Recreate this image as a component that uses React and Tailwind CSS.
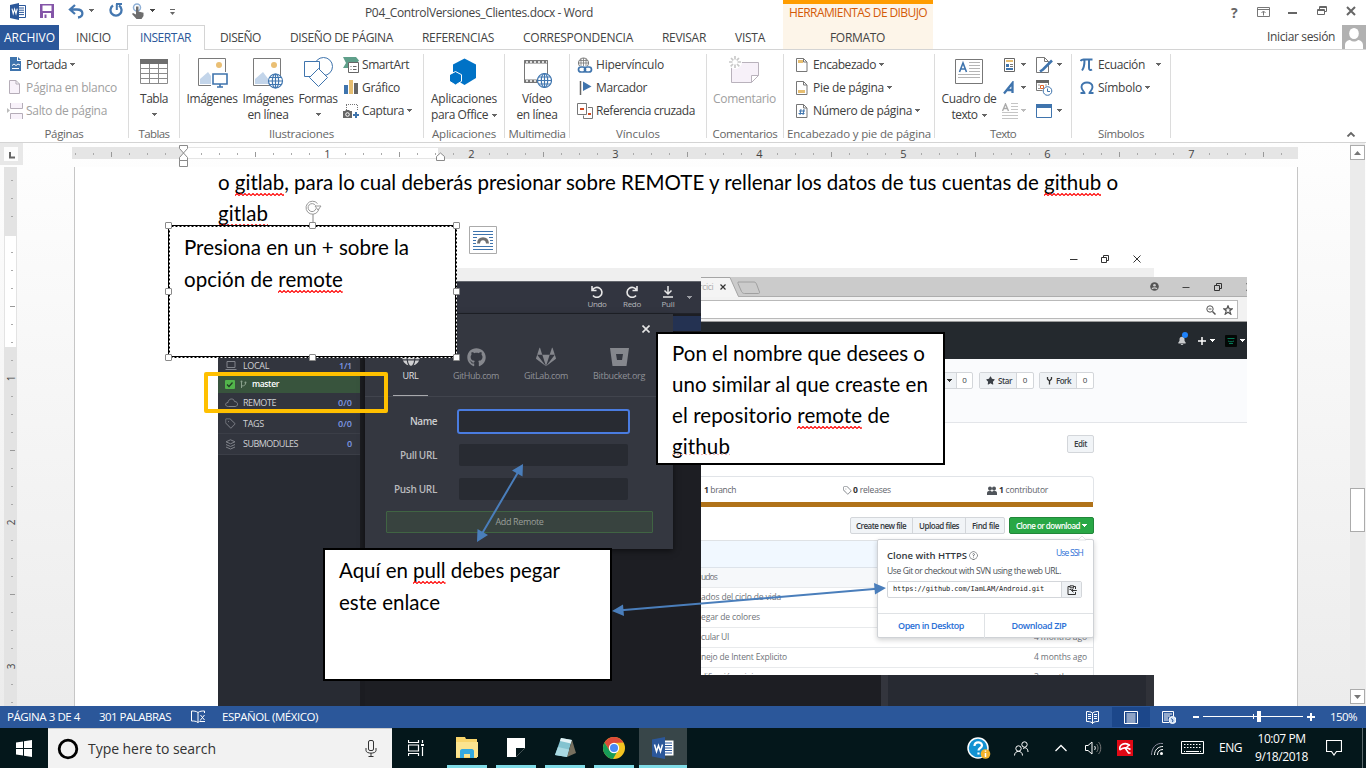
import React, { useLayoutEffect, useRef } from "react";
import { FaGithub, FaGitlab, FaGlobe, FaStar } from "react-icons/fa";
import {
  GoTag,
  GoBellFill,
  GoQuestion,
} from "react-icons/go";

/* Text run that spreads its letters so that it takes exactly `w` pixels. */
function Fit({ w, className = "", children }) {
  const ref = useRef(null);
  useLayoutEffect(() => {
    const el = ref.current;
    el.style.letterSpacing = "0px";
    const natural = el.getBoundingClientRect().width;
    const count = Math.max(1, el.textContent.length);
    el.style.letterSpacing = (w - natural) / count + "px";
  }, [w, children]);
  return (
    <span className={"inline-block shrink-0 whitespace-pre text-left " + className} style={{ width: w }}>
      <span ref={ref}>{children}</span>
    </span>
  );
}

/* SVG whose size is that of its view box. */
function Pic({ box, className = "", children }) {
  const [, , w, h] = box.split(" ");
  return (
    <svg viewBox={box} width={w} height={h} fill="none" className={"block shrink-0 " + className}>
      {children}
    </svg>
  );
}

function Caret({ className = "", fill = "#666" }) {
  return (
    <Pic box="0 0 5 3" className={className}>
      <path d="M0 0h5v1H4v1H3v1H2V2H1V1H0z" fill={fill} shapeRendering="crispEdges" />
    </Pic>
  );
}

/* Misspelled word with a tight red squiggle below its baseline. */
function Err({ children }) {
  return (
    <span className="relative">
      {children}
      <svg className="absolute bottom-[-2px] left-0 h-[3px] w-full" fill="none">
        <defs>
          <pattern id="squiggle" width="4" height="3" patternUnits="userSpaceOnUse">
            <path d="M-1 3.500L2 .5l3 3" stroke="#f00" strokeWidth="1.100" />
          </pattern>
        </defs>
        <rect width="100%" height="3" fill="url(#squiggle)" />
      </svg>
    </span>
  );
}

/* ---------- title bar and tabs ---------- */

function TitleBar() {
  return (
    <div className="flex h-[25px] w-full items-center">
      <Pic box="10 3 16 17" className="mb-[2px] ml-[10px]">
        <path d="M18 5.500h7.500v12H18" stroke="#2b579a" />
        <path d="M19 8h5M19 10.200h5M19 12.400h5M19 14.600h5" stroke="#2b579a" />
        <path d="M10 5l9-2v17l-9-2z" fill="#2b579a" />
        <path d="M12 8.700l1.200 5 1.400-4.600 1.400 4.600 1.200-5" stroke="#fff" strokeWidth="1.100" />
      </Pic>
      <Pic box="40 4 14 14" className="mb-[3px] ml-[14px]">
        <path d="M40 4h14v14H40z" fill="#8455a8" />
        <path d="M42.500 5.500h9v5.500h-9zM43 13h8v5h-8z" fill="#fff" />
        <path d="M44.500 14.500h2v3.500h-2z" fill="#8455a8" />
      </Pic>
      <Pic box="68 2 16 16" className="mb-[4px] ml-[14px]">
        <path d="M75 4l-5 4.500 5 4.500M70 8.500h7c7 0 7 7 1 8" stroke="#4477b0" strokeWidth="2.300" />
      </Pic>
      <Caret className="mb-[4px] ml-[5px]" />
      <Pic box="108 3 15 15" className="mb-[4px] ml-[14px]">
        <path d="M113 5.500a5.500 5.500 0 1 0 6 0" stroke="#4477b0" strokeWidth="2.300" />
        <path d="M116 4h6M116.800 4v6" stroke="#4477b0" strokeWidth="2" />
      </Pic>
      <Pic box="131 3 14 16" className="mb-[3px] ml-[8px]">
        <circle cx="137" cy="7.500" r="3.500" stroke="#8fb0d6" strokeWidth="1.500" />
        <path d="M136 6.500h2.500v5l5 1.200v3.300l-2 3h-5l-4.500-5 1-1 3 1.500z" fill="#6d6d6d" />
      </Pic>
      <Caret className="mb-[4px] ml-[5px]" fill="#444" />
      <Pic box="170 8 6 8" className="mb-[2px] ml-[15px]">
        <path d="M170 9.500h5" stroke="#666" />
        <path d="M170 12h5l-2.500 3z" fill="#666" />
      </Pic>
      <Fit w={228} className="ml-[189px] text-[12px] leading-[25px] text-[#444]">
        P04_ControlVersiones_Clientes.docx - Word
      </Fit>
      <div className="ml-[190px] flex h-[25px] w-[150px] flex-col border-t-[4px] border-[#ff9c00] bg-[#fdf5e9]">
        <Fit w={138} className="ml-[6px] text-[12px] leading-[18px] text-[#d45a08]">
          HERRAMIENTAS DE DIBUJO
        </Fit>
      </div>
      <span className="ml-[298px] w-[9px] text-[14px] leading-[22px] font-bold text-[#666]">?</span>
      <Pic box="1257 6 13 10" className="mb-[2px] ml-[17px]">
        <path d="M1257.500 6.500h12v9h-12zM1257.500 8.500h12" stroke="#777" />
        <path d="M1263.500 14.500v-4M1261.500 12l2-2 2 2" stroke="#777" />
      </Pic>
      <Pic box="1288 7 9 8" className="mb-[3px] ml-[18px]">
        <path d="M1288 13h9" stroke="#666" strokeWidth="2" />
      </Pic>
      <Pic box="1317 6 10 10" className="mb-[3px] ml-[20px]">
        <path d="M1317.500 9.500h7v5h-7zM1317.500 10.500h7M1319.500 9v-2.500h7v5h-2M1319.500 7.500h7" stroke="#666" />
      </Pic>
      <Pic box="1346 6 10 10" className="mb-[3px] ml-[19px]">
        <path d="M1347 7l8 8M1355 7l-8 8" stroke="#666" strokeWidth="2" />
      </Pic>
    </div>
  );
}

function Tabs() {
  return (
    <div className="flex h-[25px] w-full items-stretch text-[12px] leading-[25px] text-[#444]">
      <div className="w-[59px] bg-[#2b579a] pl-[4px] text-white">
        <Fit w={51}>ARCHIVO</Fit>
      </div>
      <div className="flex w-[68px] border-b border-[#d4d4d4] pl-[17px]">
        <Fit w={35}>INICIO</Fit>
      </div>
      <div className="flex w-[78px] border-x border-t border-[#d4d4d4] pl-[12px] leading-[23px] text-[#2b579a]">
        <Fit w={51}>INSERTAR</Fit>
      </div>
      <div className="flex w-[578px] border-b border-[#d4d4d4] pl-[15px]">
        <Fit w={41}>DISEÑO</Fit>
        <Fit w={103} className="ml-[29px]">DISEÑO DE PÁGINA</Fit>
        <Fit w={72} className="ml-[29px]">REFERENCIAS</Fit>
        <Fit w={110} className="ml-[29px]">CORRESPONDENCIA</Fit>
        <Fit w={44} className="ml-[29px]">REVISAR</Fit>
        <Fit w={30} className="ml-[29px]">VISTA</Fit>
      </div>
      <div className="w-[150px] border-b border-[#d4d4d4] bg-[#fdf5e9] pl-[47px]">
        <Fit w={55}>FORMATO</Fit>
      </div>
      <div className="flex w-[433px] border-b border-[#d4d4d4] pl-[334px] leading-[24px]">
        <Fit w={68}>Iniciar sesión</Fit>
        <Pic box="0 0 24 24" className="ml-[7px] bg-[#b1b1b1]">
          <ellipse cx="12" cy="8.500" rx="4.800" ry="5.500" fill="#fff" />
          <path d="M3 24v-4c0-4 4-5 5-5 2.500 2 5.500 2 8 0 1 0 5 1 5 5v4z" fill="#fff" />
        </Pic>
      </div>
    </div>
  );
}

/* ---------- ribbon ---------- */

function Group({ className, label, lw, children }) {
  return (
    <div className={"flex h-[92px] shrink-0 " + className}>
      <div className="flex min-w-0 flex-1 flex-col">
        <div className="mt-[4px] flex h-[71px]">{children}</div>
        <div className="flex justify-center leading-[17px] text-[#666]">
          <Fit w={lw} className="text-[11.5px]">{label}</Fit>
        </div>
      </div>
      <div className="mt-[4px] h-[84px] w-px bg-[#dcdcdc]" />
    </div>
  );
}

function Small({ icon, text, w, gap = "w-[17px]", caret, caretGap = "ml-[5px]", off }) {
  return (
    <div className={"flex h-[23px] items-center " + (off ? "text-[#a0a0a0]" : "text-[#404040]")}>
      <div className={"flex shrink-0 " + gap}>{icon}</div>
      <Fit w={w}>{text}</Fit>
      {caret && <Caret className={caretGap} />}
    </div>
  );
}

function Big({ className, icon, lines, caret, off }) {
  return (
    <div className={"flex shrink-0 flex-col items-center leading-[16px] " + className + (off ? " text-[#a0a0a0]" : " text-[#404040]")}>
      {icon}
      <div className="h-px" />
      {lines.map(([t, w], i) => (
        <div key={i} className="flex items-center">
          <Fit w={w}>{t}</Fit>
          {caret === "inline" && i === lines.length - 1 && <Caret className="ml-[4px]" />}
        </div>
      ))}
      {caret === "below" && <Caret className="mt-[6px]" />}
    </div>
  );
}

const globe = (cx, cy, r) => (
  <g stroke="#4177b0" strokeWidth="1.200">
    <circle cx={cx} cy={cy} r={r} fill="#fff" />
    <ellipse cx={cx} cy={cy} rx={r / 2.2} ry={r} />
    <path d={`M${cx - r} ${cy}h${2 * r}M${cx} ${cy - r}v${2 * r}M${cx - r + 1} ${cy - r / 2}h${2 * r - 2}M${cx - r + 1} ${cy + r / 2}h${2 * r - 2}`} />
  </g>
);

const photo = (x) => (
  <g>
    <path d={`M${x + 0.5} 58.500h27v27h-27z`} fill="#fff" stroke="#7a7a7a" />
    <path d={`M${x + 2} 84v-5l8-7 9 12z`} fill="#c3d5ea" />
    <circle cx={x + 21} cy="65" r="3" fill="#eabf74" />
  </g>
);

const sheet = (
  <path d="M796.500 57.500h7l3.500 3.500v9.500h-10.500zM803.500 57.500v3.500h3.500" fill="#fff" stroke="#777" />
);

function Ribbon() {
  return (
    <div className="flex h-[93px] w-full border-b border-[#d4d4d4] text-[12px]">
      <Group className="w-[129px]" label="Páginas" lw={39}>
        <div className="-mt-px flex flex-col pl-[7px]">
          <Small
            gap="w-[19px]"
            icon={
              <Pic box="7 57 16 15">
                <path d="M10 57h7v4h4v10H10z" fill="#3f74ad" />
                <path d="M18 57l3 3h-3z" fill="#3f74ad" />
                <path d="M12 65.500l2-1.500 2 1.500 2-1.500 2 1M12 68.500h7" stroke="#fff" />
              </Pic>
            }
            text="Portada" w={41} caret caretGap="ml-[3px]"
          />
          <Small
            gap="w-[19px]" off
            icon={
              <Pic box="7 80 16 15">
                <path d="M9.500 80.500h6.500l3.500 3.500v9.500h-10zM16 80.500v3.500h3.500" fill="#f8f2fa" stroke="#b5adb8" />
              </Pic>
            }
            text="Página en blanco" w={91}
          />
          <Small
            gap="w-[19px]" off
            icon={
              <Pic box="7 102 16 16">
                <path d="M10.500 102v5.500h12V102M10.500 118v-5.500h12v5.500" fill="#f8f2fa" stroke="#b5adb8" />
                <path d="M7 107v5l3-2.500z" fill="#bbb" />
              </Pic>
            }
            text="Salto de página" w={81}
          />
        </div>
      </Group>

      <Group className="w-[51px]" label="Tablas" lw={31}>
        <Big
          className="w-[50px]"
          icon={
            <Pic box="140 54 28 36">
              <path d="M140.500 59.500h27v24h-27zM140 68.500h28M140 73.500h28M140 78.500h28M149.500 63v21M158.500 63v21" stroke="#8b8b8b" />
              <path d="M140 59h28v5h-28z" fill="#6e6e6e" />
            </Pic>
          }
          lines={[["Tabla", 28]]} caret="below"
        />
      </Group>

      <Group className="w-[244px]" label="Ilustraciones" lw={65}>
        <Big
          className="ml-[6px] w-[52px]"
          icon={
            <Pic box="197 54 31 36">
              {photo(198)}
              <path d="M211 72h18v16h-18z" fill="#fff" />
              <path d="M213 74h14v10h-14zM220 84v3M217 87h6" stroke="#3f74ad" strokeWidth="1.600" />
            </Pic>
          }
          lines={[["Imágenes", 51]]}
        />
        <Big
          className="ml-[4px] w-[52px]"
          icon={
            <Pic box="253 54 32 36">
              {photo(254)}
              {globe(276.5, 81, 7)}
            </Pic>
          }
          lines={[["Imágenes", 51], ["en línea", 41]]}
        />
        <Big
          className="ml-[3px] w-[42px]"
          icon={
            <Pic box="302 54 31 36">
              <circle cx="322.500" cy="66.500" r="9" fill="#fff" stroke="#3f74ad" />
              <path d="M303.500 61.500h15v15h-15z" fill="#fff" stroke="#3f74ad" />
              <path d="M317.500 68.500l9 9-9 9-9-9z" fill="#fff" stroke="#3f74ad" />
            </Pic>
          }
          lines={[["Formas", 39]]} caret="below"
        />
        <div className="-mt-px ml-[4px] flex flex-col">
          <Small
            gap="w-[19px]"
            icon={
              <Pic box="343 56 16 16">
                <path d="M343 56h13l3 3.500-2 2.500h-7v5h-7l3-5z" fill="#5f9f8a" />
                <path d="M348.500 61.500h10v10h-10z" fill="#fff" stroke="#666" />
                <path d="M350.500 65.500h1M353 65.500h3.500M350.500 68.500h1M353 68.500h3.500" stroke="#666" />
              </Pic>
            }
            text="SmartArt" w={47}
          />
          <Small
            gap="w-[19px]"
            icon={
              <Pic box="343 80 16 15">
                <path d="M344 85h4v9h-4z" fill="#3f74ad" />
                <path d="M349 80h4v14h-4z" fill="#e6bd70" />
                <path d="M354 83h4v11h-4z" fill="#666" />
              </Pic>
            }
            text="Gráfico" w={38}
          />
          <Small
            gap="w-[19px]"
            icon={
              <Pic box="343 103 17 15">
                <path d="M346 104.500h12M346.500 105v5M357.500 105v5" stroke="#777" strokeDasharray="1 1" />
                <path d="M343 111h2l1-1h3l1 1h2v7h-9z" fill="#666" />
                <circle cx="347.500" cy="114.500" r="1.800" stroke="#fff" />
                <path d="M356 112v6M353 115h6" stroke="#3f74ad" strokeWidth="2" />
              </Pic>
            }
            text="Captura" w={42} caret caretGap="ml-[3px]"
          />
        </div>
      </Group>

      <Group className="w-[81px]" label="Aplicaciones" lw={64}>
        <Big
          className="w-[80px]"
          icon={
            <Pic box="450 54 28 36">
              <path d="M464.500 58.500l11.500 6v13.500l-11.500 7-11.500-7V64.500z" fill="#0072c6" />
              <path d="M455.500 71.500l6 3.200v6.600l-6 3.700-6-3.700v-6.600z" fill="#0072c6" stroke="#fff" />
            </Pic>
          }
          lines={[["Aplicaciones", 66], ["para Office", 57]]} caret="inline"
        />
      </Group>

      <Group className="w-[65px]" label="Multimedia" lw={57}>
        <Big
          className="w-[64px]"
          icon={
            <Pic box="523 54 30 36">
              <path d="M525.500 60.500h23v22h-23z" fill="#fff" stroke="#777" />
              <path d="M525 62h24M525 81h24" stroke="#777" strokeWidth="3" />
              <path d="M527 62h21M527 81h21" stroke="#fff" strokeDasharray="2 2" strokeWidth="1.500" />
              {globe(545.5, 80.5, 7)}
            </Pic>
          }
          lines={[["Vídeo", 30], ["en línea", 41]]}
        />
      </Group>

      <Group className="w-[137px]" label="Vínculos" lw={44}>
        <div className="-mt-px flex flex-col pl-[7px]">
          <Small
            gap="w-[19px]"
            icon={
              <Pic box="577 56 16 16">
                <circle cx="583.500" cy="62" r="5" stroke="#777" />
                <path d="M578 62h11M583.500 57v10M579.500 59.500h8M581 57.500v8M586 57.500v8" stroke="#777" strokeWidth=".8" />
                <path d="M577 65h16v7h-16z" fill="#fff" />
                <rect x="578.500" y="66" width="7" height="5" rx="2.500" stroke="#3f74ad" strokeWidth="1.700" />
                <rect x="584.500" y="66" width="7" height="5" rx="2.500" stroke="#3f74ad" strokeWidth="1.700" />
              </Pic>
            }
            text="Hipervínculo" w={68}
          />
          <Small
            gap="w-[19px]"
            icon={
              <Pic box="577 79 16 16">
                <path d="M580.500 80v14" stroke="#666" strokeWidth="1.500" />
                <path d="M583 80.500l8.500 5-8.500 4.500z" fill="#3f74ad" />
              </Pic>
            }
            text="Marcador" w={51}
          />
          <Small
            gap="w-[19px]"
            icon={
              <Pic box="577 102 16 16">
                <path d="M577.500 102.500h9v11h-9z" stroke="#777" fill="#fff" />
                <path d="M588 106.500h4.500v11h-9v-3" stroke="#777" />
                <path d="M580 107h4v2h-4zM588 112h3v2h-3z" fill="#d24a23" />
              </Pic>
            }
            text="Referencia cruzada" w={99}
          />
        </div>
      </Group>

      <Group className="w-[77px]" label="Comentarios" lw={65}>
        <Big
          off
          className="w-[75px]"
          icon={
            <Pic box="729 54 31 36">
              <path d="M731.500 62.500h27v13l-7 7h-20zM758.500 75.500h-7v7" fill="#f7f1f9" stroke="#b9b2bc" />
              <circle cx="735" cy="62" r="7" fill="#fff" />
              <path d="M735 56v3.500M735 64.500v3.500M729 62h3.500M737.500 62h3.500M731 58l2.300 2.300M737 64l2.300 2.300M739 58l-2.300 2.300M733 64l-2.300 2.300" stroke="#c9c9c9" strokeWidth="1.700" />
            </Pic>
          }
          lines={[["Comentario", 63]]}
        />
      </Group>

      <Group className="w-[151px]" label="Encabezado y pie de página" lw={144}>
        <div className="-mt-px flex flex-col pl-[12px]">
          <Small icon={<Pic box="796 57 12 14">{sheet}<path d="M798 59h5v3h-5z" fill="#e6bd70" /></Pic>} text="Encabezado" w={63} caret caretGap="ml-[3px]" />
          <Small icon={<Pic box="796 57 12 14">{sheet}<path d="M798 66h7v3h-7z" fill="#e6bd70" /></Pic>} text="Pie de página" w={71} caret caretGap="ml-[3px]" />
          <Small
            icon={<Pic box="796 57 12 14">{sheet}<path d="M801 62l-1 6M804 62l-1 6M799 64h6M798.500 66.500h6" stroke="#3f74ad" /></Pic>}
            text="Número de página" w={99} caret caretGap="ml-[3px]"
          />
        </div>
      </Group>

      <Group className="w-[137px]" label="Texto" lw={26}>
        <Big
          className="ml-[5px] w-[58px]"
          icon={
            <Pic box="955 54 28 36">
              <path d="M955.500 59.500h27v24h-27z" stroke="#777" />
              <path d="M969 62.500h11M969 65.500h11M969 68.500h11M969 71.500h11M958 74.500h22M958 77.500h22" stroke="#b5b5b5" />
              <path d="M959.500 72l3.500-9 3.500 9M960.700 69h4.700" stroke="#3f74ad" strokeWidth="1.600" />
            </Pic>
          }
          lines={[["Cuadro de", 55], ["texto", 26]]} caret="inline"
        />
        <div className="-mt-px ml-[4px] flex w-[34px] flex-col">
          <div className="flex h-[23px] items-center gap-[3px]">
            <Pic box="1002 57 16 14">
              <path d="M1004.500 57.500h10v13h-10z" stroke="#666" />
              <path d="M1006 59h7v2h-7z" fill="#e6bd70" />
              <path d="M1006 63h3v3h-3zM1006 67h7v2h-7z" fill="#3f74ad" />
              <path d="M1010 63.500h3M1010 65.500h3" stroke="#777" />
            </Pic>
            <Caret />
          </div>
          <div className="flex h-[23px] items-center gap-[3px]">
            <Pic box="1002 80 16 14">
              <path d="M1004 92.500l8.500-10.500v10M1006.500 89h6" stroke="#3f74ad" strokeWidth="2.300" />
            </Pic>
            <Caret />
          </div>
          <div className="flex h-[23px] items-center gap-[3px]">
            <Pic box="1002 102 16 16">
              <path d="M1011 102.500h7M1011 105.500h7M1011 108.500h7M1002 111.500h16M1002 114.500h16M1002 117.500h16" stroke="#c5c5c5" />
              <path d="M1002.500 110l3-7 3 7M1003.500 107.500h4" stroke="#aaa" strokeWidth="1.400" />
            </Pic>
            <Caret fill="#bbb" />
          </div>
        </div>
        <div className="-mt-px flex flex-col">
          <div className="flex h-[23px] items-center gap-[4px]">
            <Pic box="1035 56 17 16">
              <path d="M1035.500 56.500h8l4 4v11h-12zM1043.500 56.500v4h4" stroke="#777" fill="#fff" />
              <path d="M1051 59.500l-9 9-3 2" stroke="#3f74ad" strokeWidth="2.600" />
            </Pic>
            <Caret />
          </div>
          <div className="flex h-[23px] items-center">
            <Pic box="1035 79 17 16">
              <path d="M1035.500 80v9.500h6M1047.500 80v4" stroke="#777" />
              <path d="M1035 79h13v3h-13z" fill="#666" />
              <path d="M1037 84h2M1044 84h2M1037 87.500h2" stroke="#999" />
              <path d="M1039.500 84.500h3v3h-3z" stroke="#e0662b" />
              <circle cx="1046.500" cy="90" r="4.300" fill="#fff" stroke="#3f74ad" />
              <path d="M1046.500 87.500v3h2.500" stroke="#3f74ad" />
            </Pic>
          </div>
          <div className="flex h-[23px] items-center gap-[4px]">
            <Pic box="1035 103 17 14">
              <path d="M1035.500 103.500h15v13h-15z" stroke="#3f74ad" fill="#fff" />
              <path d="M1035 103h16v4h-16z" fill="#3f74ad" />
            </Pic>
            <Caret />
          </div>
        </div>
      </Group>

      <Group className="w-[99px]" label="Símbolos" lw={46}>
        <div className="-mt-px flex flex-col pl-[8px]">
          <Small gap="w-[18px]" icon={<Pic box="1080 57 14 14"><path d="M1080.500 60c1-1.500 2-1.500 3-1.500h9M1084.500 59c0 5-.5 8-2.500 10.500M1089 59v8c0 2 1.500 2.500 3 1.500" stroke="#3f74ad" strokeWidth="2" /></Pic>} text="Ecuación" w={47} caret caretGap="ml-[11px]" />
          <Small gap="w-[18px]" icon={<Pic box="1080 80 14 14"><path d="M1080.500 92h4c0-1.500-3-2.500-3-6 0-6 11-6 11 0 0 3.500-3 4.500-3 6h4" stroke="#3f74ad" strokeWidth="1.900" /></Pic>} text="Símbolo" w={44} caret caretGap="ml-[3px]" />
        </div>
      </Group>

      <div className="flex flex-1 items-end justify-end pr-[10px] pb-[5px]">
        <Pic box="0 0 10 6"><path d="M1.500 5.500L5 2l3.500 3.500" stroke="#666" strokeWidth="1.800" /></Pic>
      </div>
    </div>
  );
}

/* ---------- rulers ---------- */

function HorizontalRuler() {
  const ticks = [];
  for (let x = 75.5, i = -6; x < 1296; x += 18, i += 1) {
    const m = ((i % 8) + 8) % 8;
    if (m === 0) {
      if (i > 0) ticks.push(<text key={i} x={x} y="158" textAnchor="middle" className="text-[11px]" fill="#444">{i / 8}</text>);
    } else if (m === 4) ticks.push(<path key={i} d={`M${x} 152v5`} stroke="#999" />);
    else ticks.push(<path key={i} d={`M${x} 153v2`} stroke="#aaa" />);
  }
  return (
    <Pic box="72 143 1226 24">
      <path d="M72 147h1226v12H72z" fill="#e5e5e5" />
      <path d="M183 148h255v10H183z" fill="#fff" />
      {ticks}
      <path d="M179.500 145.500h8v3l-4 4.500-4-4.500zM179.500 160.500v-3l4-4.500 4 4.500v3zM179.500 160.500h8v6h-8zM436.500 160.500v-4l4-3.500 4 3.500v4z" fill="#fff" stroke="#8a8a8a" />
    </Pic>
  );
}

function VerticalRuler() {
  const ticks = [];
  for (let y = 180.5, i = -3; y < 706; y += 18, i += 1) {
    const m = ((i % 8) + 8) % 8;
    if (m === 0) {
      if (i > 0) ticks.push(<text key={i} transform={`translate(15 ${y}) rotate(-90)`} textAnchor="middle" className="text-[10px]" fill="#444">{i / 8}</text>);
    } else if (m === 4) ticks.push(<path key={i} d={`M10 ${y}h5`} stroke="#999" />);
    else ticks.push(<path key={i} d={`M11 ${y}h2`} stroke="#aaa" />);
  }
  return (
    <Pic box="4 167 13 539" className="ml-[4px]">
      <path d="M4 167h13v539H4z" fill="#e3e3e3" />
      <path d="M5 236h11v111H5z" fill="#fff" />
      {ticks}
    </Pic>
  );
}

/* ---------- pictures placed in the document ---------- */

function ToolButton({ className, label, w, children }) {
  return (
    <div className={"flex flex-col items-center pt-[3px] " + className}>
      {children}
      <Fit w={w} className="mt-px text-[8px] leading-[9px] text-[#b4b6ba]">{label}</Fit>
    </div>
  );
}

function SideRow({ className, icon, label, w, count, cw }) {
  return (
    <div className={"flex items-center border-b border-[#3b3e47] pl-[7px] pr-[8px] " + className}>
      <div className="flex w-[18px] text-[#80838a]">{icon}</div>
      <Fit w={w} className="text-[9px] text-[#d0d1d4]">{label}</Fit>
      <span className="flex-1" />
      <Fit w={cw} className="text-[9px] font-semibold text-[#7d97e6]">{count}</Fit>
    </div>
  );
}

function Provider({ className, icon, label, w, on }) {
  return (
    <div className={"flex flex-col items-center " + className}>
      <div className="flex h-[22px] items-center">{icon}</div>
      <Fit w={w} className={"mt-[2px] text-[9px] leading-[12px] " + (on ? "text-[#e0e0e2]" : "text-[#8f9197]")}>{label}</Fit>
    </div>
  );
}

function WindowButtons() {
  return (
    <div className="flex h-[24px] items-center bg-white pl-[852px] pt-[6px]">
      <Pic box="0 0 8 8"><path d="M0 4.500h7.500" stroke="#333" /></Pic>
      <Pic box="0 0 8 8" className="ml-[23px]"><path d="M.5 2.500h5v5h-5zM2.500 2V.5h5v5H6" stroke="#333" /></Pic>
      <Pic box="0 0 8 8" className="ml-[24px]"><path d="M.5.5l7 7M7.500.5l-7 7" stroke="#333" /></Pic>
    </div>
  );
}

function GitClient() {
  return (
    <div className="flex h-[462px] w-[936px] flex-col overflow-hidden">
      <WindowButtons />
      <div className="h-[13px] shrink-0 bg-[#efefef]" />
      <div className="flex h-[33px] shrink-0 border-b border-t border-t-[#63666d] border-b-[#202229] bg-[#323540]">
        <ToolButton className="ml-[364px] w-[30px]" label="Undo" w={19}>
          <Pic box="0 0 14 13"><path d="M2 1v4.500h4.500M2.500 5a5 5 0 1 1 .5 5.500" stroke="#e8e8e8" strokeWidth="1.600" /></Pic>
        </ToolButton>
        <ToolButton className="ml-[5px] w-[30px]" label="Redo" w={18}>
          <Pic box="0 0 14 13"><path d="M12 1v4.500H7.500M11.500 5a5 5 0 1 0-.5 5.500" stroke="#e8e8e8" strokeWidth="1.600" /></Pic>
        </ToolButton>
        <ToolButton className="ml-[6px] w-[30px]" label="Pull" w={13}>
          <Pic box="0 0 12 13"><path d="M6 1v8M2.500 5.500L6 9l3.500-3.500M1 12h10" stroke="#e8e8e8" strokeWidth="1.500" /></Pic>
        </ToolButton>
        <Caret className="ml-[4px] mt-[14px]" fill="#9a9ca2" />
      </div>
      <div className="flex flex-1">
        <div className="flex w-[142px] flex-col bg-[#282b33]">
          <div className="h-[43px] bg-[#32353e]" />
          <SideRow
            className="h-[19px] bg-[#32353e]" label="LOCAL" w={26} count="1/1" cw={13}
            icon={<Pic box="0 0 12 10"><path d="M2 .5h8v6H2zM.5 8.500h11" stroke="currentColor" /></Pic>}
          />
          <div className="flex h-[17px] items-center bg-[#38543d] pl-[7px]">
            <Pic box="0 0 10 9">
              <rect width="10" height="9" rx="1" fill="#52b54b" />
              <path d="M2 4.500l2 2 3.500-4" stroke="#1f3d22" strokeWidth="1.300" />
            </Pic>
            <Pic box="0 0 7 9" className="ml-[5px]">
              <path d="M1.500 2v6M1.500 6c3 0 4-1 4-3" stroke="#8aa08c" />
              <circle cx="1.500" cy="1.500" r="1" fill="#8aa08c" /><circle cx="5.500" cy="2.500" r="1" fill="#8aa08c" />
            </Pic>
            <Fit w={27} className="ml-[5px] text-[8.500px] font-semibold text-white">master</Fit>
          </div>
          <SideRow
            className="h-[21px] bg-[#32353e]" label="REMOTE" w={33} count="0/0" cw={14}
            icon={<Pic box="0 0 13 10"><path d="M3.500 8.500c-4 0-3.500-4-.5-4 .5-4.500 6-4.500 6.500-1 4 0 4 5 .5 5z" stroke="currentColor" /></Pic>}
          />
          <SideRow
            className="h-[20px] bg-[#32353e]" label="TAGS" w={21} count="0/0" cw={14}
            icon={<GoTag className="size-[11px]" />}
          />
          <SideRow
            className="h-[21px] bg-[#32353e]" label="SUBMODULES" w={55} count="0" cw={5}
            icon={<Pic box="0 0 11 11"><path d="M5.500.8l4.500 2-4.500 2-4.500-2zM1 5.500l4.500 2 4.500-2M1 8l4.500 2L10 8" stroke="currentColor" /></Pic>}
          />
        </div>
        <div className="w-[5px] bg-[#1b1c21]" />
        <div className="flex w-[516px] items-start bg-[#1d1e23]">
          <RemoteDialog />
          <div className="mt-[2px] h-[15px] flex-1 bg-[#243252]" />
        </div>
        <div className="w-[7px] bg-[#33353d]" />
        <div className="flex-1 border-r-[8px] border-[#303239] bg-[#272a32]" />
      </div>
    </div>
  );
}

function RemoteDialog() {
  return (
    <div className="flex h-[235px] w-[308px] flex-col bg-[#343740] shadow-[0_2px_6px_rgba(0,0,0,0.5)]">
      <div className="flex h-[32px] justify-end pr-[23px] pt-[11px]">
        <Pic box="0 0 8 8"><path d="M.5.5l7 7M7.500.5l-7 7" stroke="#e4e4e4" strokeWidth="1.600" /></Pic>
      </div>
      <div className="flex h-[51px] border-b border-[#41444d]">
        <Provider className="ml-[28px] w-[35px] border-b border-[#a8a9ad]" on label="URL" w={16} icon={<FaGlobe className="size-[18px] text-[#d0d0d2]" />} />
        <Provider className="ml-[20px] w-[56px]" label="GitHub.com" w={46} icon={<FaGithub className="size-[19px] text-[#85878d]" />} />
        <Provider className="ml-[14px] w-[56px]" label="GitLab.com" w={44} icon={<FaGitlab className="size-[20px] text-[#85878d]" />} />
        <Provider
          className="ml-[16px] w-[58px]" label="Bitbucket.org" w={52}
          icon={<Pic box="0 0 19 18"><path fillRule="evenodd" d="M0 0h19l-2.500 18h-14zM6 6l1 6h5l1-6z" fill="#85878d" /></Pic>}
        />
      </div>
      <div className="mt-[12px] flex h-[25px] items-center text-[10px] text-[#cdced1]">
        <div className="flex w-[72px] justify-end"><Fit w={27} className="font-semibold">Name</Fit></div>
        <div className="ml-[20px] h-[25px] w-[173px] rounded-[3px] border-2 border-[#4a7ce0] bg-[#282b32]" />
      </div>
      <div className="mt-[10px] flex h-[22px] items-center text-[10px] text-[#b9babd]">
        <div className="flex w-[72px] justify-end"><Fit w={37} className="font-semibold">Pull URL</Fit></div>
        <div className="ml-[22px] h-[22px] w-[169px] rounded-[2px] bg-[#282b32]" />
      </div>
      <div className="mt-[12px] flex h-[22px] items-center text-[10px] text-[#b9babd]">
        <div className="flex w-[72px] justify-end"><Fit w={43} className="font-semibold">Push URL</Fit></div>
        <div className="ml-[22px] h-[22px] w-[169px] rounded-[2px] bg-[#282b32]" />
      </div>
      <div className="ml-[21px] mt-[11px] flex h-[22px] w-[267px] items-center justify-center rounded-[1px] border border-[#406443] bg-[#38433f]">
        <Fit w={48} className="text-[9px] text-[#989e99]">Add Remote</Fit>
      </div>
    </div>
  );
}

function Counter({ className, icon, label, w, bw }) {
  return (
    <div className={"flex h-[17px] rounded-[2px] border border-[#d3d6da] bg-white text-[8px] leading-[14px] text-[#3a3f45] " + className}>
      <div className={"flex items-center border-r border-[#d3d6da] bg-[#eff2f5] pl-[5px] " + bw}>
        {icon}
        {label && <Fit w={w} className="ml-[3px] font-semibold">{label}</Fit>}
      </div>
      <div className="flex-1 text-center">0</div>
    </div>
  );
}

const commits = [
  ["udos", 16, ""],
  ["ados del ciclo de vida", 80, ""],
  ["egar de colores", 59, ""],
  ["cular UI", 28, "4 months ago"],
  ["nejo de Intent Explicito", 86, "4 months ago"],
  ["dificación minima", 64, "3 months ago"],
];

function Browser() {
  return (
    <div className="flex h-[398px] w-[546px] flex-col overflow-hidden bg-white">
      <div className="flex h-[20px] shrink-0 items-center border-b border-[#adadad] bg-[#cbcbcb]">
        <Pic box="701 277 64 20">
          <path d="M701 277.500h29l8.500 19.500H701z" fill="#f4f4f4" />
          <path d="M701 277.500h29l8.500 19" stroke="#a5a5a5" />
          <text x="699" y="290" className="text-[8.500px] tracking-[-0.3px]" fill="#aaa">rcici</text>
          <path d="M720.500 284.500l5 5M725.500 284.500l-5 5" stroke="#333" strokeWidth="1.200" />
          <path d="M738 282h16c1.500 0 2 1 2.500 2l3 8c0 1 0 1.500-1 1.500h-14c-1.500 0-2.500-1-3-2l-3.500-8z" stroke="#a0a0a0" />
        </Pic>
        <Pic box="0 0 9 9" className="ml-[385px]">
          <circle cx="4.500" cy="4.500" r="4.300" fill="#555" />
          <circle cx="4.500" cy="3.200" r="1.300" fill="#ccc" /><path d="M2 6.800c1-1.300 4-1.300 5 0" stroke="#ccc" strokeWidth="1.200" />
        </Pic>
        <Pic box="0 0 8 8" className="ml-[23px]"><path d="M.5 4.500h7" stroke="#444" /></Pic>
        <Pic box="0 0 8 8" className="ml-[24px]"><path d="M.5 2.500h5v5h-5zM2.500 2V.5h5v5H6" stroke="#333" /></Pic>
        <Pic box="0 0 3 8" className="ml-[24px]"><path d="M.5.5l3 3.500-3 3.500" stroke="#333" /></Pic>
      </div>
      <div className="flex h-[25px] shrink-0 border-b border-[#9b9b9b] bg-[#f2f2f2] pt-[3px]">
        <div className="flex h-[19px] w-[537px] items-center justify-end border border-l-0 border-[#b9b9b9] bg-white pr-[4px]">
          <Pic box="0 0 10 10"><circle cx="4" cy="4" r="3.200" stroke="#555" /><path d="M6.500 6.500l3 3" stroke="#555" strokeWidth="1.500" /><path d="M2.500 4h3" stroke="#555" /></Pic>
          <Pic box="0 0 10 10" className="ml-[7px]"><path d="M5 .8l1.200 3h3.200L6.800 5.800l1 3.400L5 7.200 2.200 9.200l1-3.400L.6 3.800h3.200z" stroke="#555" strokeWidth="1.200" /></Pic>
        </div>
      </div>
      <div className="flex h-[37px] shrink-0 items-center bg-[#24292e]">
        <div className="relative ml-[476px] flex text-[#c9cbcd]">
          <GoBellFill className="size-[10px]" />
          <span className="absolute left-[5px] top-[-4px] size-[6px] rounded-full bg-[#1f83fb]" />
        </div>
        <Pic box="0 0 8 8" className="ml-[11px]"><path d="M4 0v8M0 4h8" stroke="#fff" strokeWidth="1.500" /></Pic>
        <Caret className="ml-[4px]" fill="#fff" />
        <Pic box="0 0 12 12" className="ml-[10px]">
          <rect width="12" height="12" rx="1" fill="#030806" />
          <path d="M2.500 3.500h7M3 6c2 1 4 1 6 0M4 8.500h4" stroke="#067a58" />
        </Pic>
        <Caret className="ml-[3px]" fill="#fff" />
      </div>
      <div className="flex h-[64px] shrink-0 border-b border-[#e3e5e9] bg-[#fafbfd] pt-[13px]">
        <Counter className="ml-[210px] w-[62px]" bw="w-[45px] justify-end pr-[4px]" icon={<Caret fill="#333" />} />
        <Counter className="ml-[6px] w-[55px]" bw="w-[37px]" icon={<FaStar className="ml-[1px] size-[9px]" />} label="Star" w={14} />
        <Counter
          className="ml-[5px] w-[55px]" bw="w-[37px]" label="Fork" w={15}
          icon={<Pic box="0 0 7 9" className="ml-[1px]"><path d="M1.500 1v2L3.500 5v3.500M5.500 1v2L3.500 5" stroke="#333" strokeWidth="1.300" /></Pic>}
        />
      </div>
      <div className="flex h-[53px] shrink-0 pl-[366px] pt-[12px]">
        <div className="flex h-[18px] w-[27px] justify-center rounded-[2px] border border-[#d3d6da] bg-[#f1f4f7] text-[8px] leading-[15px] text-[#3a3f45]">
          <Fit w={13} className="font-semibold">Edit</Fit>
        </div>
      </div>
      <div className="flex h-[26px] w-[393px] shrink-0 items-center rounded-tr border-r border-t border-[#e1e4e8] pt-[2px] text-[8.500px] text-[#5f646b]">
        <Fit w={32} className="ml-[3px]"><b className="text-[#333]">1</b> branch</Fit>
        <GoTag className="ml-[107px] size-[9px]" />
        <Fit w={38} className="ml-[1px]"><b className="text-[#333]">0</b> releases</Fit>
        <Pic box="0 0 10 9" className="ml-[96px]">
          <circle cx="3" cy="2.500" r="2" fill="#4f545a" /><circle cx="7" cy="2.500" r="2" fill="#4f545a" />
          <path d="M0 9V7c0-2 2-2 3-2.500C4 5 5 5.500 5 6c0-.5 1-1 2-1.500C8 5 10 5 10 7v2z" fill="#4f545a" />
        </Pic>
        <Fit w={49} className="ml-[2px]"><b className="text-[#333]">1</b> contributor</Fit>
      </div>
      <div className="h-[5px] w-[392px] shrink-0 bg-[#b07219]" />
      <div className="flex h-[33px] w-[393px] shrink-0 justify-end pt-[10px] text-[8px] leading-[15px] text-[#33383d]">
        <div className="flex h-[17px] rounded-[2px] border border-[#d3d6da] bg-[#f1f4f7] font-semibold">
          <div className="w-[62px] border-r border-[#d3d6da] pl-[5px]"><Fit w={50}>Create new file</Fit></div>
          <div className="w-[53px] border-r border-[#d3d6da] pl-[6px]"><Fit w={40}>Upload files</Fit></div>
          <div className="w-[38px] pl-[6px]"><Fit w={27}>Find file</Fit></div>
        </div>
        <div className="ml-[4px] flex h-[17px] w-[85px] items-center rounded-[2px] border border-[#22863a] bg-[#28a745] pl-[6px] font-semibold text-white">
          <Fit w={64}>Clone or download</Fit>
          <Caret className="ml-[2px]" fill="#fff" />
        </div>
      </div>
      <div className="flex w-[393px] shrink-0 flex-col border-r border-t border-[#dfe2e5]">
        <div className="h-[27px] border-b border-[#dde3ea] bg-[#f1f8ff]" />
        {commits.map(([msg, w, age], i) => (
          <div key={i} className={"flex h-[20px] items-center justify-between border-b border-[#e8eaec] pr-[6px] text-[8.500px] text-[#6f7379] " + (i === 0 ? "bg-[#f6f8fa]" : "")}>
            <Fit w={w}>{msg}</Fit>
            {age && <Fit w={53}>{age}</Fit>}
          </div>
        ))}
      </div>
    </div>
  );
}

function ClonePopover() {
  return (
    <div className="flex h-[99px] w-[217px] flex-col rounded-[2px] border border-[#cfd2d6] bg-white shadow-[0_2px_5px_rgba(27,31,35,0.2)]">
      <div className="flex h-[14px] items-start justify-between pl-[9px] pr-[10px] pt-[6px]">
        <div className="flex items-center pt-[3px] text-[9.500px] leading-[13px] font-semibold text-[#33383d]">
          <Fit w={80}>Clone with HTTPS</Fit>
          <GoQuestion className="ml-[2px] size-[9px]" />
        </div>
        <Fit w={27} className="text-[8.500px] leading-[13px] text-[#2a6fd6]">Use SSH</Fit>
      </div>
      <Fit w={174} className="ml-[9px] mt-[10px] text-[8.500px] leading-[14px] text-[#4b5056]">
        Use Git or checkout with SVN using the web URL.
      </Fit>
      <div className="ml-[9px] mt-[3px] flex h-[17px] w-[195px] rounded-[2px] border border-[#d3d6da]">
        <div className="flex w-[174px] border-r border-[#d3d6da] pl-[5px]">
          <Fit w={151} className="font-['DejaVu_Sans_Mono',monospace] text-[7px] leading-[15px] text-[#222]">
            https://github.com/IamLAM/Android.git
          </Fit>
        </div>
        <div className="flex flex-1 items-center justify-center bg-[#eff2f5]">
          <Pic box="0 0 10 10"><path d="M3 1.500H1v8h7.500V7M6.500 1.500h2V4M3 .8h3.500v2H3zM9.800 5.500H4.500M6.500 3.700L4.500 5.500l2 1.800M2.500 4.500h2" stroke="#333" /></Pic>
        </div>
      </div>
      <div className="mt-[15px] flex flex-1 border-t border-[#dfe2e5] font-semibold text-[9px] leading-[24px] text-[#2a6fd6]">
        <div className="flex w-[107px] justify-center border-r border-[#dfe2e5]"><Fit w={66}>Open in Desktop</Fit></div>
        <div className="flex flex-1 justify-center"><Fit w={55}>Download ZIP</Fit></div>
      </div>
    </div>
  );
}

function TextBox({ className, children }) {
  return (
    <div className={"absolute h-[133px] w-[289px] overflow-hidden border-2 border-black bg-white pl-[14px] text-[20.500px] text-black " + className}>
      {children}
    </div>
  );
}

/* Page: everything below floats over the sheet at its own anchor. */
function Sheet() {
  return (
    <div className="relative h-[539px] w-[1224px] shrink-0 overflow-hidden border-x border-[#c6c6c6] bg-white">
      <div className="flex flex-col pl-[143px] font-['Lato',sans-serif] text-[20.500px] leading-[31px] text-black">
        <Fit w={900}>
          o <Err>gitlab</Err>, para lo cual deberás presionar sobre REMOTE y rellenar los datos de tus cuentas de <Err>github</Err> o
        </Fit>
        <Fit w={50}><Err>gitlab</Err></Fit>
      </div>

      <div className="absolute left-[143px] top-[77px]"><GitClient /></div>
      <div className="absolute left-[626px] top-[110px]"><Browser /></div>
      <div className="absolute left-[802px] top-[372px]"><ClonePopover /></div>
      <div className="absolute left-[129px] top-[205px] h-[41px] w-[184px] rounded-[2px] border-4 border-[#ffc000]" />

      <div className="font-['Lato',sans-serif]">
        <TextBox className="left-[93px] top-[58px] pt-[4px] leading-[32px]">
          <Fit w={225} className="block">Presiona en un + sobre la</Fit>
          <Fit w={159} className="block">opción de <Err>remote</Err></Fit>
        </TextBox>
        <TextBox className="left-[581px] top-[165px] pt-[4px] leading-[31px]">
          <Fit w={253} className="block">Pon el nombre que desees o</Fit>
          <Fit w={256} className="block">uno similar al que creaste en</Fit>
          <Fit w={218} className="block">el repositorio <Err>remote</Err> de</Fit>
          <div className="h-[27px] overflow-hidden"><Fit w={58}>github</Fit></div>
        </TextBox>
        <TextBox className="left-[248px] top-[381px] pt-[4px] leading-[32px]">
          <Fit w={221} className="block">Aquí en <Err>pull</Err> debes pegar</Fit>
          <Fit w={101} className="block">este enlace</Fit>
        </TextBox>
      </div>

      <Pic box="75 167 1222 539" className="absolute left-0 top-0">
        <path d="M169.500 226.500h287v131h-287z" stroke="#fff" strokeDasharray="2 2" />
        <path d="M313 214v9" stroke="#888" />
        <path d="M317.500 203.500a6.500 6.500 0 1 0 1.500 5M315.500 205.500a4 4 0 1 0 .5 3" stroke="#999" />
        <path d="M315 206h6l-3 4z" fill="#fff" stroke="#999" />
        <path d="M673 454.500h57" stroke="#f3b6b6" strokeDasharray="2 2" />
        {[[169, 225.5], [313, 225.5], [456.5, 225.5], [169, 291.5], [456.5, 291.5], [169, 357.5], [313, 357.5], [456.5, 357.5]].map(([x, y], i) => (
          <rect key={i} x={Math.round(x) - 3.5} y={Math.round(y) - 3.5} width="6" height="6" rx=".5" fill="#fff" stroke="#8a8a8a" />
        ))}
        <path d="M481.500 534.500l37-63M621 610.200l256-21.400" stroke="#4a7ebb" strokeWidth="2" />
        <path d="M477 542l.5-13 10.500 6zM523 464l-11 6.500 10.500 6zM612 611l11-6.500 1 11.500zM886 588l-12-5 1 11.500z" fill="#4a7ebb" />
        <path d="M1078 540l4-4 4 4z" fill="#fff" stroke="#cfd2d6" strokeWidth=".6" />
        <path d="M469.500 226.500h27v27h-27z" fill="#fff" stroke="#ababab" />
        <path d="M473 231.500h20M473 234.500h20M473 246.500h20M473 249.500h20M473 237.500h4M489 237.500h4M473 240.500h3M490 240.500h3M473 243.500h3M490 243.500h3" stroke="#3f74ad" />
        <path d="M478.500 243.500c.5-6.500 8.500-6.500 9 0" stroke="#707070" strokeWidth="3" />
      </Pic>
    </div>
  );
}

function Workspace() {
  return (
    <div className="flex h-[563px] w-full bg-gradient-to-b from-[#fefefe] to-[#ececec]">
      <div className="flex w-[1350px] flex-col">
        <div className="flex h-[24px]">
          <div className="flex h-[22px] w-[23px] bg-[#e8e8e8] pl-[4px] pt-[4px]">
            <Pic box="0 0 14 14" className="bg-[#fdfdfd]"><path d="M6 5v5.500h5" stroke="#666" strokeWidth="2" /></Pic>
          </div>
          <div className="ml-[49px]"><HorizontalRuler /></div>
        </div>
        <div className="flex">
          <div className="w-[74px]"><VerticalRuler /></div>
          <Sheet />
        </div>
      </div>
      <div className="flex w-[15px] flex-col bg-[#ebebeb]">
        <div className="mt-[2px] flex h-[15px] items-center justify-center border border-[#ababab] bg-white">
          <Pic box="0 0 7 4"><path d="M0 4h7L3.500 0z" fill="#777" /></Pic>
        </div>
        <div className="mt-[328px] h-[44px] border border-[#ababab] bg-white" />
        <div className="mt-[157px] flex h-[15px] items-center justify-center border border-[#ababab] bg-white">
          <Pic box="0 0 7 4"><path d="M0 0h7L3.500 4z" fill="#777" /></Pic>
        </div>
      </div>
    </div>
  );
}

/* ---------- status bar and taskbar ---------- */

function StatusBar() {
  return (
    <div className="flex h-[22px] w-full items-center bg-[#2b579a] text-[11.500px] leading-[22px] text-white">
      <Fit w={73} className="ml-[7px]">PÁGINA 3 DE 4</Fit>
      <Fit w={72} className="ml-[19px]">301 PALABRAS</Fit>
      <Pic box="0 0 15 14" className="ml-[20px]">
        <path d="M7 2.500C5 1 3 1 .5 1v10C3 11 5 11 7 12.500M7 2.500v10M7 2.500C9 1 11 1 13.500 1v2M7 12.500c1-1 2-1.500 3-1.500M9.500 5l4 5M13.500 5l-4 5M9 11.500h5" stroke="#fff" />
      </Pic>
      <Fit w={96} className="ml-[16px]">ESPAÑOL (MÉXICO)</Fit>
      <Pic box="0 0 13 13" className="ml-[768px]">
        <path d="M6.500 2C4.500.5 2.500.5.5.5v10c2 0 4 0 6 1.500 2-1.500 4-1.500 6-1.500V.5c-2 0-4 0-6 1.500zM6.500 2v11M2 3.500h3M2 5.500h3M2 7.500h3M8 3.500h3M8 5.500h3M8 7.500h3" stroke="#fff" />
      </Pic>
      <div className="ml-[13px] flex h-[20px] w-[38px] items-center justify-center bg-[#1c478a]">
        <Pic box="0 0 14 13"><path d="M.5.5h13v12H.5zM2.500 3h9M2.500 5h9M2.500 7h9M2.500 9h9M2.500 11h9" stroke="#fff" /></Pic>
      </div>
      <Pic box="0 0 14 13" className="ml-[12px]">
        <path d="M7 11.500H.5V.5h11v5M2 3h8M2 5h6M2 7h4M2 9h4" stroke="#fff" />
        <circle cx="10.500" cy="9" r="3.500" fill="#cfe0f5" stroke="#fff" /><path d="M9 7.500l2 1.500-.5 2" stroke="#2b579a" />
      </Pic>
      <Pic box="1193 706 122 22" className="ml-[17px]">
        <path d="M1193 717h6M1307 717h8M1311 713v8" stroke="#fff" strokeWidth="2" />
        <path d="M1203 716.500h100M1253.500 714v5" stroke="#fff" />
        <path d="M1257 711h4v11h-4z" fill="#fff" />
      </Pic>
      <Fit w={27} className="ml-[15px]">150%</Fit>
    </div>
  );
}

function Task({ className = "", active, children }) {
  return (
    <div className={"flex h-full flex-col items-center justify-between border-b-[3px] border-[#7fdbe6] " + (active ? "w-[48px] bg-[#384649] " : "w-[40px] ") + className}>
      <div className="flex flex-1 items-center pt-[2px]">{children}</div>
    </div>
  );
}

function Taskbar() {
  return (
    <div className="flex h-[40px] w-full items-center bg-[#04171b] text-white">
      <Pic box="0 0 16 17" className="ml-[16px]">
        <path d="M0 2.500l7-1v6.500H0zM8 1.300L16 0v8H8zM0 9h7v6.500l-7-1zM8 9h8v8l-8-1.300z" fill="#fff" />
      </Pic>
      <div className="ml-[16px] flex h-full w-[344px] items-center border-t border-[#ccc] bg-[#f2f2f2]">
        <Pic box="0 0 22 22" className="ml-[9px]"><circle cx="11" cy="11" r="8.800" stroke="#000" strokeWidth="2.800" /></Pic>
        <Fit w={128} className="ml-[9px] text-[14px] leading-[38px] text-[#333]">Type here to search</Fit>
        <Pic box="0 0 12 17" className="ml-[149px]">
          <rect x="3.500" y=".5" width="5" height="10" rx="1.500" stroke="#333" />
          <path d="M1 8v2.500c0 3.500 10 3.500 10 0V8M6 13v3M3.500 16.500h5" stroke="#333" />
        </Pic>
      </div>
      <Pic box="0 0 17 16" className="ml-[16px]">
        <path d="M.5 0v2.500h10V0M.5 16v-2.500h10V16M.5 5h10v6H.5zM14.500 0v3M14.500 7v9" stroke="#fff" strokeWidth="1.200" />
        <path d="M13 4h3v2h-3z" fill="#fff" />
      </Pic>
      <Task className="ml-[22px]">
        <Pic box="0 0 22 21">
          <path d="M0 0h9l1 2h11v19H0z" fill="#f9d56b" /><path d="M0 5h22v15H0z" fill="#fce48f" />
          <path d="M4 21v-7c0-1 1-2 2-2h10c1 0 2 1 2 2v7h-4v-4H8v4z" fill="#35a9df" />
        </Pic>
      </Task>
      <Task className="ml-[9px]">
        <Pic box="0 0 18 19"><path d="M0 0h18v10l-9 9H0z" fill="#fff" /><path d="M9 19v-9h9z" fill="#04171b" /></Pic>
      </Task>
      <Task className="ml-[9px]">
        <Pic box="0 0 22 21">
          <path d="M7 1l11 2-5 17-12-2z" fill="#83c3d0" /><path d="M7 1l11 2-1 3.500L6 4z" fill="#e3f2f5" />
          <path d="M18 3l4 13-9 4z" fill="#77705f" /><path d="M4 10l11 2.500-2 7.500-12-2z" fill="#a9d9e2" />
        </Pic>
      </Task>
      <Task className="ml-[9px]">
        <Pic box="0 0 22 22">
          <circle cx="11" cy="11" r="11" fill="#f3c321" />
          <path d="M1.500 5.500A11 11 0 0 1 20.500 5.500L11 6 6.500 13.500z" fill="#dd4b39" />
          <path d="M1.500 5.500A11 11 0 0 0 10 22l4.500-8-8-.5z" fill="#179b58" />
          <circle cx="11" cy="11" r="5.200" fill="#fff" /><circle cx="11" cy="11" r="4" fill="#4a8af4" />
        </Pic>
      </Task>
      <Task className="ml-[5px]" active>
        <Pic box="0 0 22 22">
          <path d="M11 3.500h10.500v15H11z" fill="#fff" /><path d="M13 6h7M13 8.500h7M13 11h7M13 13.500h7M13 16h7" stroke="#2b579a" />
          <path d="M0 2.500L13 0v22L0 19.500z" fill="#2b579a" /><path d="M2.500 7.500l2 7 2-6 2 6 2-7" stroke="#fff" strokeWidth="1.500" />
        </Pic>
      </Task>

      <Pic box="0 0 24 24" className="ml-[280px]">
        <circle cx="11" cy="12" r="10" fill="#1392d2" stroke="#fff" strokeWidth="1.500" />
        <path d="M7.500 10c0-5 7.500-4.500 7.500-.5 0 2.500-3.500 2.500-3.500 5M11.500 16.500v2" stroke="#fff" strokeWidth="2.200" />
        <circle cx="18.500" cy="18" r="4.800" fill="#f4b32c" /><path d="M18.500 17v4M18.500 14.500v1.300" stroke="#fff" strokeWidth="1.500" />
      </Pic>
      <Pic box="0 0 15 15" className="ml-[23px]">
        <circle cx="10.500" cy="3.500" r="2.700" stroke="#fff" /><circle cx="4.500" cy="7.500" r="2.700" stroke="#fff" />
        <path d="M.5 14.500c0-5.500 8-5.500 8 0M9 7.500c3-2 5 .5 5 3.500" stroke="#fff" />
      </Pic>
      <Pic box="0 0 12 8" className="ml-[26px]"><path d="M.5 7L6 1.500 11.500 7" stroke="#fff" strokeWidth="1.300" /></Pic>
      <Pic box="0 0 17 14" className="ml-[18px]">
        <path d="M.5 4.500h2.500L7 1v12L3 9.500H.5z" stroke="#fff" /><path d="M9.500 5c1 1 1 3 0 4" stroke="#fff" />
        <path d="M11.500 3c2 2 2 6 0 8M13.500 1c3 3 3 9 0 12" stroke="#777" />
      </Pic>
      <Pic box="0 0 16 16" className="ml-[15px] bg-[#e10915]">
        <path d="M3 10C1.500 4.500 8 1.500 13 5.500M3 10c2.500-2.500 7-3 10.500-.5" stroke="#fff" strokeWidth="1.600" />
        <path d="M12.500 4.500L8.500 8.500l3 4.500h2" stroke="#fff" strokeWidth="1.500" />
      </Pic>
      <Pic box="0 0 13 13" className="ml-[18px]">
        <path d="M.5 13C.5 6 5 .5 12 1.500" stroke="#889" /><path d="M3.500 13c0-5 3.500-8.500 8.500-8.500M6.500 13c0-3.500 2-5.500 5.500-5.500" stroke="#fff" /><circle cx="10.500" cy="11.500" r="1.500" fill="#fff" />
      </Pic>
      <Pic box="0 0 23 14" className="ml-[17px]">
        <path d="M.5.5h22v12H.5zM5 10.500h13" stroke="#fff" /><path d="M3 3.500h17M3 6.500h17" stroke="#fff" strokeDasharray="1.500 1.500" /><path d="M3 10.500h1M19 10.500h1" stroke="#fff" />
      </Pic>
      <Fit w={23} className="ml-[15px] text-[12px]">ENG</Fit>
      <div className="ml-[13px] flex w-[53px] flex-col items-center text-[12px] leading-[18px]">
        <Fit w={48}>10:07 PM</Fit>
        <Fit w={53}>9/18/2018</Fit>
      </div>
      <Pic box="0 0 16 16" className="ml-[18px]"><path d="M.5.5h15v11h-5L8 15l-2.500-3.500h-5z" stroke="#fff" strokeWidth="1.200" /></Pic>
      <div className="ml-[20px] h-full w-px bg-[#5c6a6d]" />
    </div>
  );
}

export default function App() {
  return (
    <div className="flex h-[768px] w-[1366px] flex-col overflow-hidden bg-white font-['Open_Sans','Noto_Sans',sans-serif] [&_*]:box-border">
      <TitleBar />
      <Tabs />
      <Ribbon />
      <Workspace />
      <StatusBar />
      <Taskbar />
    </div>
  );
}
